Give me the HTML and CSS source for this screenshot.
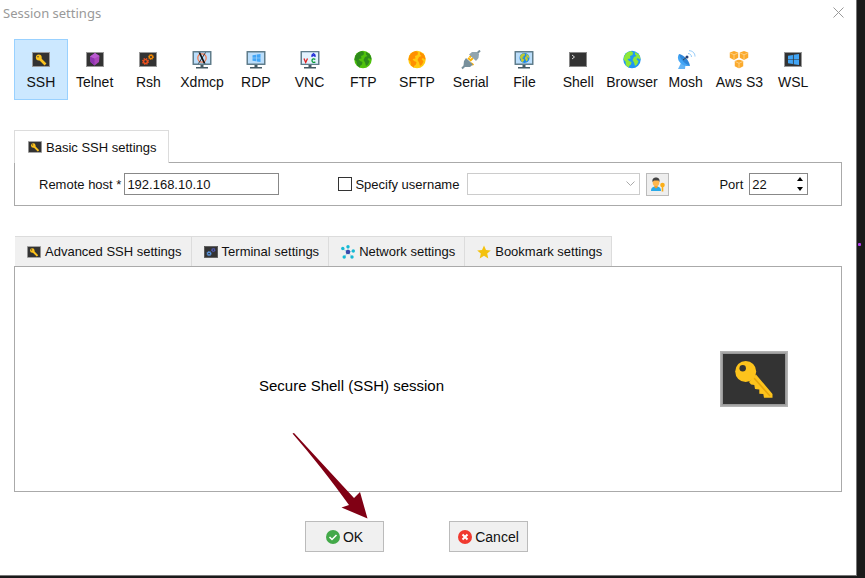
FILE: index.html
```html
<!DOCTYPE html>
<html lang="en">
<head>
    <meta charset="UTF-8">
    <meta name="viewport" content="width=device-width, initial-scale=1.0">
    <title>Session settings</title>
    <link rel="stylesheet" href="styles.css">
</head>
<body>

<!-- Shared icons -->
<svg class="sprite" aria-hidden="true">
    <symbol id="key" viewBox="0 0 68 56">
        <rect width="68" height="56" fill="#b4b4b4"/>
        <rect x="1.500" y="1.500" width="65" height="53" fill="#999"/>
        <rect x="3" y="3" width="62" height="50" fill="#333"/>
        <path d="M29 31L36 23.500L52.500 43V46.700H44L43.300 43L39.300 42.700V38.500L35 38L34.300 34L31 33.500Z" fill="#fdc31c"/>
        <path d="M34 27L50 45" stroke="#e5a50c" stroke-width="1.500"/>
        <circle cx="25.700" cy="20.500" r="10.500" fill="#fdc31c"/>
        <circle cx="22.700" cy="17.300" r="3.200" fill="#333"/>
    </symbol>
    <symbol id="keysmall" viewBox="0 0 18 15">
        <rect x=".5" y=".5" width="17" height="14" fill="#333" stroke="#999"/>
        <circle cx="6.800" cy="5.500" r="2.900" fill="#fdc31c"/>
        <path d="M7 6L13.500 12.500" stroke="#fdc31c" stroke-width="2.600"/>
        <circle cx="6" cy="4.800" r=".7" fill="#333"/>
    </symbol>
    <symbol id="gear" viewBox="0 0 10 10">
        <circle cx="5" cy="5" r="2.700" fill="none" stroke="currentColor" stroke-width="2"/>
        <circle cx="5" cy="5" r="4.200" fill="none" stroke="currentColor" stroke-width="1.600" stroke-dasharray="1.900 1.400"/>
    </symbol>
    <symbol id="monitor" viewBox="0 0 20 20">
        <path d="M8.500 14h3v3H16v1.500H4V17h4.500z" fill="#455a64"/>
        <rect x=".5" y="1" width="19" height="14" rx=".5" fill="#607d8b"/>
        <rect x="2" y="2.500" width="16" height="11" fill="#bbdefb"/>
    </symbol>
    <symbol id="windows" viewBox="0 0 10 10">
        <path d="M0 1.500L4.500 .8V4.700H0zM5.200 .7L10 0V4.700H5.200zM0 5.300H4.500V9.200L0 8.500zM5.200 5.300H10V10L5.200 9.300z" fill="#42a5f5"/>
    </symbol>
    <symbol id="land" viewBox="0 0 18 18">
        <path d="M4 2L8 .5L10 2L9.500 4.500L7 5.500L7.500 8L4.500 8.500L6 10.500L8.500 11.500L8 14L6 15.500L6 17L3 15L2.500 11L.5 9L1.500 5zM12 1.500L16 4L17.500 8L16.500 9L15 7.500L13.500 8.500L15.500 11L14 14L12 15.500L11 12L9.500 9.500L11 6.500L13.500 5.500L12 4z"/>
    </symbol>
    <symbol id="cube" viewBox="0 0 10 10">
        <path d="M5 0L9.700 1.800V7.500L5 10L.3 7.500V1.800z" fill="#fbaa2c"/>
        <path d="M.8 2.300L5 4.200L9.200 2.300M5 4.200V9.500" fill="none" stroke="#ffe3b0" stroke-width=".7"/>
    </symbol>
</svg>

<main class="window">
    <header class="titlebar">
        <h1>Session settings</h1>
        <button class="close" type="button" aria-label="Close">
            <svg width="11" height="11" viewBox="0 0 11 11"><path d="M.5 .5L10.500 10.500M10.500 .5L.5 10.500" stroke="#999"/></svg>
        </button>
    </header>

    <nav class="types">
        <button class="type selected" type="button">
            <svg viewBox="0 0 20 20"><use href="#keysmall" x="1" y="2" width="18" height="15"/></svg>
            SSH
        </button>
        <button class="type" type="button">
            <svg viewBox="0 0 20 20">
                <rect x="1.500" y="2.500" width="17" height="14" fill="#333" stroke="#999"/>
                <path d="M10 3L14.500 6L14 12L9.500 15.500L5.500 12L5 6.500z" fill="#ab47bc"/>
                <path d="M5 6.500L9.500 8.500V15.500L5.500 12z" fill="#8e35b0"/>
                <path d="M10 3L14.500 6L9.500 8.500L5 6.500z" fill="#ba5bd0"/>
            </svg>
            Telnet
        </button>
        <button class="type" type="button">
            <svg viewBox="0 0 20 20" color="#f4511e">
                <rect x="1.500" y="2.500" width="17" height="14" fill="#333" stroke="#999"/>
                <use href="#gear" x="4" y="8" width="7" height="7"/>
                <use href="#gear" x="10" y="4" width="6" height="6" color="#fb8c00"/>
            </svg>
            Rsh
        </button>
        <button class="type" type="button">
            <svg viewBox="0 0 20 20">
                <use href="#monitor" width="20" height="20"/>
                <circle cx="10" cy="8" r="4.200" fill="none" stroke="#f47b50" stroke-width="1.300"/>
                <path d="M6.500 2.500H8.300L13.500 13.500H11.700z" fill="#111"/>
                <path d="M13.500 2.500L6.500 13.500" stroke="#111" stroke-width=".8"/>
            </svg>
            Xdmcp
        </button>
        <button class="type" type="button">
            <svg viewBox="0 0 20 20">
                <use href="#monitor" width="20" height="20"/>
                <use href="#windows" x="6" y="4" width="9" height="8"/>
            </svg>
            RDP
        </button>
        <button class="type" type="button">
            <svg viewBox="0 0 20 20" fill="none" stroke-width="1.300">
                <use href="#monitor" width="20" height="20"/>
                <rect x="2" y="2.500" width="16" height="11" fill="#e3f2fd"/>
                <path d="M4 8.500L5.700 12.500L7.500 8.500" stroke="#e02020"/>
                <path d="M12 7V5L13.500 3.700L15 5V7M12 5.700H15" stroke="#2430d8"/>
                <path d="M15.300 9.500C14 8.200 12 8.800 12 10.600S14 13 15.300 11.700" stroke="#0a9d3a"/>
            </svg>
            VNC
        </button>
        <button class="type" type="button">
            <svg viewBox="0 0 20 20">
                <circle cx="10" cy="9.500" r="8.700" fill="#4fc20c"/>
                <use href="#land" x="1" y=".5" width="18" height="18" fill="#2e8b1b"/>
            </svg>
            FTP
        </button>
        <button class="type" type="button">
            <svg viewBox="0 0 20 20">
                <circle cx="10" cy="9.500" r="8.700" fill="#ffca10"/>
                <use href="#land" x="1" y=".5" width="18" height="18" fill="#ff9000"/>
            </svg>
            SFTP
        </button>
        <button class="type" type="button">
            <svg viewBox="0 0 20 20">
                <path d="M1 18.500L4 15.500M16 3.500L19 .5" stroke="#78909c" stroke-width="2"/>
                <path d="M7 8L10 10.500M10 13L12.500 15M8.500 7.500L11 5M9 11L12 8" stroke="#ffb300" stroke-width="1.800"/>
                <path d="M3 11L5 8L12 14.500L9 17L4 17L2.500 15.500z" fill="#78909c"/>
                <path d="M8 4.500L11 2L16 2L18 4L17.500 8L15 11z" fill="#90a4ae"/>
            </svg>
            Serial
        </button>
        <button class="type" type="button">
            <svg viewBox="0 0 20 20">
                <use href="#monitor" width="20" height="20"/>
                <circle cx="10.500" cy="8" r="5" fill="#1e88e5"/>
                <use href="#land" x="5.500" y="3" width="10" height="10" fill="#c0ca33"/>
            </svg>
            File
        </button>
        <button class="type" type="button">
            <svg viewBox="0 0 20 20">
                <rect x="1.500" y="2.500" width="17" height="14" fill="#333" stroke="#888"/>
                <path d="M4 5L6.500 7L4 9" fill="none" stroke="#ddd"/>
            </svg>
            Shell
        </button>
        <button class="type" type="button">
            <svg viewBox="0 0 20 20">
                <circle cx="10" cy="9.500" r="8.700" fill="#2196f3"/>
                <use href="#land" x="1" y=".5" width="18" height="18" fill="#8ee838"/>
            </svg>
            Browser
        </button>
        <button class="type" type="button">
            <svg viewBox="0 0 20 20">
                <path d="M5 13L2 19H9L9.500 15z" fill="#64b5f6"/>
                <path d="M3 4C-.500 9 5 17 14 16z" fill="#42a5f5"/>
                <path d="M3 4C8 5 13 10 14 16C9 14 4 9 3 4" fill="#2f86d8"/>
                <path d="M7 10L11 7" stroke="#37474f"/>
                <circle cx="11" cy="7" r="1.500" fill="#263f73"/>
                <path d="M12 3.500C14 3.500 15.500 5 15.500 7M13 .7C16.500 .7 19 3 19 6.500" fill="none" stroke="#90caf9"/>
            </svg>
            Mosh
        </button>
        <button class="type" type="button">
            <svg viewBox="0 0 20 20">
                <use href="#cube" x="0" y="1" width="10" height="9"/>
                <use href="#cube" x="10" y="1" width="10" height="9"/>
                <use href="#cube" x="5" y="9.500" width="10" height="9"/>
            </svg>
            Aws S3
        </button>
        <button class="type" type="button">
            <svg viewBox="0 0 20 20">
                <rect x="1.500" y="2.500" width="17" height="14" fill="#333" stroke="#999"/>
                <use href="#windows" x="5" y="4" width="11" height="11"/>
            </svg>
            WSL
        </button>
    </nav>

    <section class="basic">
        <h2 class="tab active">
            <svg viewBox="0 0 18 15"><use href="#keysmall"/></svg>
            Basic SSH settings
        </h2>
        <form class="panel fields">
            <div class="field">
                <label for="host">Remote host *</label>
                <input class="box host" id="host" type="text" value="192.168.10.10">
            </div>
            <div class="field user">
                <input class="check" id="specify" type="checkbox">
                <label for="specify">Specify username</label>
                <div class="combo">
                    <select class="box" id="username" aria-label="Username" disabled><option></option></select>
                    <svg width="9" height="6" viewBox="0 0 9 6"><path d="M.5 .5L4.500 4.500L8.500 .5" fill="none" stroke="#aaa"/></svg>
                </div>
                <button class="users" type="button" aria-label="Manage users">
                    <svg width="15" height="15" viewBox="0 0 15 15">
                        <path d="M1 14C1 10.500 3 9.500 6 9.500S11 10.500 11 14z" fill="#29a9e8"/>
                        <path d="M4.500 8H7.500V10.500L6 11.500L4.500 10.500z" fill="#f59c1a"/>
                        <ellipse cx="6" cy="5.500" rx="3.300" ry="3.800" fill="#ffb74d"/>
                        <path d="M2.500 5C2 1.500 4 .5 6 .5S10 1.500 9.500 5L8.500 3.500L4 3.500z" fill="#424242"/>
                        <circle cx="12.500" cy="8" r="2.300" fill="#fbae17"/>
                        <path d="M12.500 9V14.500" stroke="#fbae17" stroke-width="1.600"/>
                    </svg>
                </button>
            </div>
            <div class="field port">
                <label for="port">Port</label>
                <div class="spin">
                    <input class="box" id="port" type="number" value="22">
                    <svg width="6" height="14" viewBox="0 0 6 14"><path d="M3 0L6 4H0zM0 10H6L3 14z"/></svg>
                </div>
            </div>
        </form>
    </section>

    <section class="advanced">
        <div class="tabs">
            <button class="tab" type="button">
                <svg viewBox="0 0 18 15"><use href="#keysmall"/></svg>
                Advanced SSH settings
            </button>
            <button class="tab" type="button">
                <svg viewBox="0 0 18 15" color="#5c9bea">
                    <rect x=".5" y=".5" width="17" height="14" fill="#333" stroke="#555"/>
                    <use href="#gear" x="3" y="6" width="7" height="7"/>
                    <use href="#gear" x="9" y="2" width="6" height="6" color="#5560c8"/>
                </svg>
                Terminal settings
            </button>
            <button class="tab" type="button">
                <svg viewBox="0 0 14 14" fill="#16b9d4">
                    <path d="M7 7L7 2M7 7L2 4M7 7L12 6M7 7L3.500 12M7 7L11 12" stroke="#9bdde8"/>
                    <circle cx="7" cy="1.700" r="1.700"/><circle cx="1.800" cy="3.500" r="1.700"/>
                    <circle cx="12.300" cy="6" r="1.700"/><circle cx="3.200" cy="12" r="1.700"/>
                    <circle cx="11" cy="12" r="1.700"/><circle cx="7" cy="7" r="2.300" fill="#3949ab"/>
                </svg>
                Network settings
            </button>
            <button class="tab" type="button">
                <svg viewBox="0 0 14 14"><path d="M7 .5L9 5L13.800 5.400L10.200 8.600L11.300 13.400L7 10.800L2.700 13.400L3.800 8.600L.2 5.400L5 5z" fill="#f4c20d"/></svg>
                Bookmark settings
            </button>
        </div>
        <div class="panel session">
            <p>Secure Shell (SSH) session</p>
            <svg width="68" height="56"><use href="#key"/></svg>
        </div>
    </section>

    <footer class="actions">
        <div class="confirm">
            <button class="action" type="button">
                <svg width="14" height="14" viewBox="0 0 14 14"><circle cx="7" cy="7" r="7" fill="#43a949"/><path d="M3.500 7L6 9.500L10.500 5" fill="none" stroke="#fff" stroke-width="1.500"/></svg>
                OK
            </button>
            <svg class="arrow" width="76" height="87" viewBox="0 0 76 87"><path d="M.5 1.500L2 1L62 66L68 60L75.500 86.500L49.500 75.500L57 73C40 49 19 23 .5 1.500z" fill="#800014"/></svg>
        </div>
        <button class="action" type="button">
            <svg width="14" height="14" viewBox="0 0 14 14"><circle cx="7" cy="7" r="7" fill="#f0392f"/><path d="M4.500 4.500L9.500 9.500M9.500 4.500L4.500 9.500" stroke="#fff" stroke-width="2"/></svg>
            Cancel
        </button>
    </footer>
</main>
<span class="dot"></span>

</body>
</html>
```
FILE: styles.css
```css
* {
    box-sizing: border-box;
}

body {
    display: flex;
    min-height: 100vh;
    margin: 0;
    padding: 0 8px 2px 0;
    background-color: #1a1a1a;
    font-family: "Liberation Sans", Arial, sans-serif;
    font-size: 13px;
    color: #111;
}

button, input, select {
    font: inherit;
    color: inherit;
}

.sprite {
    position: absolute;
    width: 0;
    height: 0;
}

.window {
    flex: 1;
    display: flex;
    flex-direction: column;
    min-width: 0;
    border-right: 1px solid #777;
    border-bottom: 1px solid #777;
    background-color: #fff;
}

.titlebar {
    display: flex;
    justify-content: space-between;
    align-items: center;
    height: 25px;
    padding: 0 12px 0 3px;
}

.titlebar h1 {
    margin: 0;
    font: 13px "Noto Sans", "Open Sans", sans-serif;
    color: #999;
}

.close {
    display: flex;
    padding: 0;
    border: 0;
    background: none;
}

/* Session types */
.types {
    display: flex;
    margin: 14px 36px 30px 14px;
}

.type {
    flex: 1 1 0;
    display: flex;
    flex-direction: column;
    align-items: center;
    gap: 4px;
    min-width: 0;
    height: 61px;
    padding: 10px 0 0;
    border: 1px solid transparent;
    background: none;
    font-size: 14px;
    line-height: 16px;
    white-space: nowrap;
}

.type svg {
    width: 20px;
    height: 20px;
}

.type.selected {
    border-color: #99d1ff;
    background-color: #cce8ff;
}

/* Tabs and panels */
.basic, .advanced {
    margin: 0 14px;
}

.panel {
    border: 1px solid #aaa;
}

.tab {
    display: flex;
    align-items: center;
    gap: 4px;
    height: 30px;
    margin: 0;
    padding: 0 9px 0 12px;
    border: 1px solid #dcdcdc;
    border-width: 1px 1px 0 0;
    background-color: #f0f0f0;
    font-size: 13px;
    font-weight: normal;
    white-space: nowrap;
}

.tab svg {
    width: 14px;
    height: 14px;
}

.tab.active {
    position: relative;
    width: fit-content;
    height: 33px;
    margin-bottom: -1px;
    padding: 0 11px 0 13px;
    border-left-width: 1px;
    background-color: #fff;
}

.tabs {
    display: flex;
    padding-left: 1px;
}

.fields {
    display: flex;
    align-items: center;
    height: 44px;
    padding-left: 24px;
}

.field {
    display: flex;
    align-items: center;
    gap: 3px;
}

.box {
    width: 100%;
    height: 22px;
    margin: 0;
    padding: 0 2px;
    border: 1px solid #888;
    border-radius: 0;
    outline: 0;
    background-color: #fff;
    appearance: none;
}

.box.host {
    width: 155px;
}

.user {
    margin-left: 59px;
}

.check {
    width: 14px;
    height: 14px;
    margin: 0;
    border: 1px solid #333;
    background-color: #fff;
    appearance: none;
}

.check:checked {
    background-color: #0078d7;
}

.combo, .spin {
    position: relative;
}

.combo {
    width: 173px;
    margin: 0 3px 0 5px;
}

.combo .box {
    display: block;
    border-color: #ccc;
    opacity: 1;
}

.combo svg, .spin svg {
    position: absolute;
    top: 0;
    bottom: 0;
    right: 5px;
    margin: auto 0;
    pointer-events: none;
}

.users {
    display: flex;
    justify-content: center;
    align-items: center;
    width: 23px;
    height: 23px;
    padding: 0;
    border: 1px solid #bbb;
    background-color: #eee;
}

.port {
    gap: 6px;
    margin-left: 50px;
}

.spin {
    width: 59px;
}

.spin .box {
    display: block;
    appearance: textfield;
}

.spin .box::-webkit-inner-spin-button {
    appearance: none;
}

.advanced {
    flex: 1;
    display: flex;
    flex-direction: column;
    margin-top: 30px;
}

.session {
    flex: 1;
    display: flex;
    align-items: center;
    padding-right: 53px;
}

.session p {
    flex: 1;
    margin: 0 32px 0 0;
    padding-top: 12px;
    font-size: 15px;
    text-align: center;
    color: #000;
}

/* Bottom buttons */
.actions {
    display: flex;
    justify-content: center;
    gap: 65px;
    padding: 29px 23px 23px 0;
}

.confirm {
    position: relative;
}

.action {
    display: flex;
    justify-content: center;
    align-items: center;
    gap: 3px;
    width: 79px;
    height: 31px;
    padding: 0;
    border: 1px solid #bbb;
    background-color: #f0f0f0;
    font-size: 14px;
}

.arrow {
    position: absolute;
    right: 16px;
    bottom: 33px;
    pointer-events: none;
}

.dot {
    position: absolute;
    top: 243px;
    right: 4px;
    width: 3px;
    height: 3px;
    border-radius: 1px;
    background-color: #b43cf0;
}
```
